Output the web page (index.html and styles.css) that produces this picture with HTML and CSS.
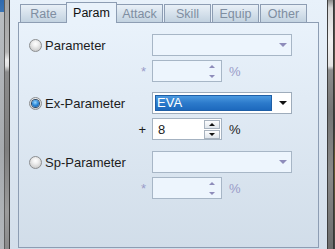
FILE: index.html
```html
<!DOCTYPE html>
<html>
<head>
<meta charset="utf-8">
<link rel="stylesheet" href="styles.css">
</head>
<body>
<div class="win">
  <div class="lstrip"><div class="l1"></div><div class="l2"></div><div class="l3"></div><div class="l4"></div></div>
  <div class="main">
    <div class="tabs">
      <div class="tab">Rate</div>
      <div class="tab sel">Param</div>
      <div class="tab">Attack</div>
      <div class="tab">Skill</div>
      <div class="tab">Equip</div>
      <div class="tab">Other</div>
    </div>
    <div class="panel">
      <div class="group">
        <label class="opt"><span class="radio"></span>Parameter</label>
        <div class="combo dis"><span class="arr"></span></div>
        <span class="sign dim">*</span>
        <div class="spinrow">
          <div class="spin dis"><span class="txt"></span><div class="btns"><span class="btn"><i class="up"></i></span><span class="btn"><i class="dn"></i></span></div></div>
          <span class="pct dim">%</span>
        </div>
      </div>
      <div class="group">
        <label class="opt"><span class="radio on"></span>Ex-Parameter</label>
        <div class="combo"><span class="hl">EVA</span><span class="arr"></span></div>
        <span class="sign">+</span>
        <div class="spinrow">
          <div class="spin"><span class="txt">8</span><div class="btns"><span class="btn"><i class="up"></i></span><span class="btn"><i class="dn"></i></span></div></div>
          <span class="pct">%</span>
        </div>
      </div>
      <div class="group g3">
        <label class="opt"><span class="radio"></span>Sp-Parameter</label>
        <div class="combo dis"><span class="arr"></span></div>
        <span class="sign dim">*</span>
        <div class="spinrow">
          <div class="spin dis"><span class="txt"></span><div class="btns"><span class="btn"><i class="up"></i></span><span class="btn"><i class="dn"></i></span></div></div>
          <span class="pct dim">%</span>
        </div>
      </div>
    </div>
  </div>
  <div class="rstrip"><div class="r1"></div><div class="r2"></div><div class="r3"></div><div class="r4"></div></div>
</div>
</body>
</html>
```
FILE: styles.css
```css
* { box-sizing: border-box; margin: 0; padding: 0; }
html, body { width: 335px; height: 249px; overflow: hidden; }
body { font-family: "Liberation Sans", Arial, sans-serif; font-size: 13px; color: #1c1c1c; }
.win { display: flex; width: 335px; height: 249px; }

.lstrip, .rstrip { display: flex; flex: none; }
.lstrip { width: 10px; }
.rstrip { width: 8px; }
.l1 { width: 4px; background: linear-gradient(#2f69ad 0, #3b74b4 12px, #b9bdc1 12px, #a6aaae 60%, #b3b7bb); }
.l2 { width: 1px; background: #5c5c5c; }
.l3 { width: 4px; background: linear-gradient(#a2a2a2 0, #b4b4b4 52px, #ececec 60px, #e2e2e2 66px, #8c8c8c 72px, #7e7e7e 60%, #9c9c9c 85%, #8a8a8a); }
.l4 { width: 1px; background: #3c3c3c; }
.r1 { width: 1px; background: #3e3e3e; }
.r2 { width: 5px; background: linear-gradient(#8a8a8a 0, #d8d8d8 8px, #f0f0f0 40px, #e4e4e4 66px, #8e8e8e 70px, #767676 45%, #8a8a8a 70%, #6c6c6c); }
.r3 { width: 1px; background: #383838; }
.r4 { width: 1px; background: linear-gradient(#4a4a4a, #5a5040 30%, #3a3a3a 50%, #6a5a30 65%, #404040); }

.main {
  flex: none; width: 317px; display: flex; flex-direction: column;
  padding: 2px 8px 1px 8px;
  background: linear-gradient(#e8f1fa, #d3deea);
}
.tabs { display: flex; align-items: flex-end; height: 20px; padding-left: 2px; gap: 1px; }
.tab {
  width: 47px; height: 18px; flex: none;
  border: 1px solid #8d9db3; border-bottom: none;
  background: linear-gradient(#e9f0f7, #c2d2e0);
  color: #7f8ea1; font-size: 12.5px; text-align: center;
  padding-top: 2px; line-height: 14px;
}
.tab.sel {
  width: 51px; height: 21px; margin: 0 -2px -1px;
  position: relative; z-index: 1;
  background: #e9f2fb; color: #111; padding-top: 3px;
}
.panel {
  flex: 1; border: 1px solid #8d9db3;
  background: linear-gradient(#e9f2fb, #d1dde9);
  padding: 11px 0 0 10px;
  display: flex; flex-direction: column; gap: 10px;
}
.g3 { margin-top: 1px; }
.group {
  display: grid; grid-template-columns: 99px 24px 140px;
  grid-template-rows: 22px 22px; row-gap: 4px; align-items: center;
}
.opt { grid-column: 1 / 3; grid-row: 1; display: flex; align-items: center; gap: 3px; white-space: nowrap; }
.combo { grid-column: 3; grid-row: 1; }
.sign { grid-column: 2; grid-row: 2; text-align: right; padding-right: 6px; }
.spinrow { grid-column: 3; grid-row: 2; display: flex; align-items: center; }

.dim { color: #9a9cc8; }

.radio {
  flex: none; width: 13px; height: 13px; border-radius: 50%;
  border: 1px solid #8c8e90;
  background: radial-gradient(circle at 50% 35%, #ffffff 0, #f0f0f0 30%, #c8c8c8 85%);
  display: flex; align-items: center; justify-content: center;
}
.radio.on::after {
  content: ""; width: 7px; height: 7px; border-radius: 50%;
  background: radial-gradient(circle at 45% 35%, #9ad8ff 0, #2a86d6 50%, #0c4c98 100%);
  box-shadow: 0 0 0 1px #2c4a6a;
}

.combo {
  height: 22px; width: 140px; border: 1px solid #9eacbb; background: #ffffff;
  display: flex; align-items: flex-start;
}
.combo.dis { border-color: #a7b6c6; background: #edf5fd; align-items: center; }
.combo .arr {
  margin-left: auto; margin-right: 4px; align-self: center;
  width: 0; height: 0;
  border-left: 4px solid transparent; border-right: 4px solid transparent;
  border-top: 4px solid #111;
}
.combo.dis .arr { border-top-color: #8e8cba; }
.hl {
  margin: 2px 0 0 2px; width: 117px; height: 16px;
  border: 1px solid #1f5fa6;
  background: linear-gradient(#4c9ae0, #2c7acb 50%, #1d69bd);
  color: #fff; padding-left: 1px; line-height: 14px;
}

.spin {
  width: 70px; height: 22px; flex: none;
  border: 1px solid #a4b2c1; background: #ffffff;
  display: flex; align-items: center; padding-left: 5px;
}
.spin.dis { border-color: #a7b6c6; background: #edf5fd; }
.spin .txt { flex: 1; }
.btns { margin-left: auto; margin-right: 1px; display: flex; flex-direction: column; gap: 1px; }
.btn {
  width: 16px; height: 9px;
  border: 1px solid #a9b3bf; background: linear-gradient(#fdfdfd, #dfe5ec);
  display: flex; align-items: center; justify-content: center;
}
.spin.dis .btn { border-color: transparent; background: none; }
.up, .dn { width: 0; height: 0; border-left: 3px solid transparent; border-right: 3px solid transparent; }
.up { border-bottom: 3px solid #111; }
.dn { border-top: 3px solid #111; }
.spin.dis .up { border-bottom-color: #8e8cba; }
.spin.dis .dn { border-top-color: #8e8cba; }
.pct { margin-left: 7px; }
```
